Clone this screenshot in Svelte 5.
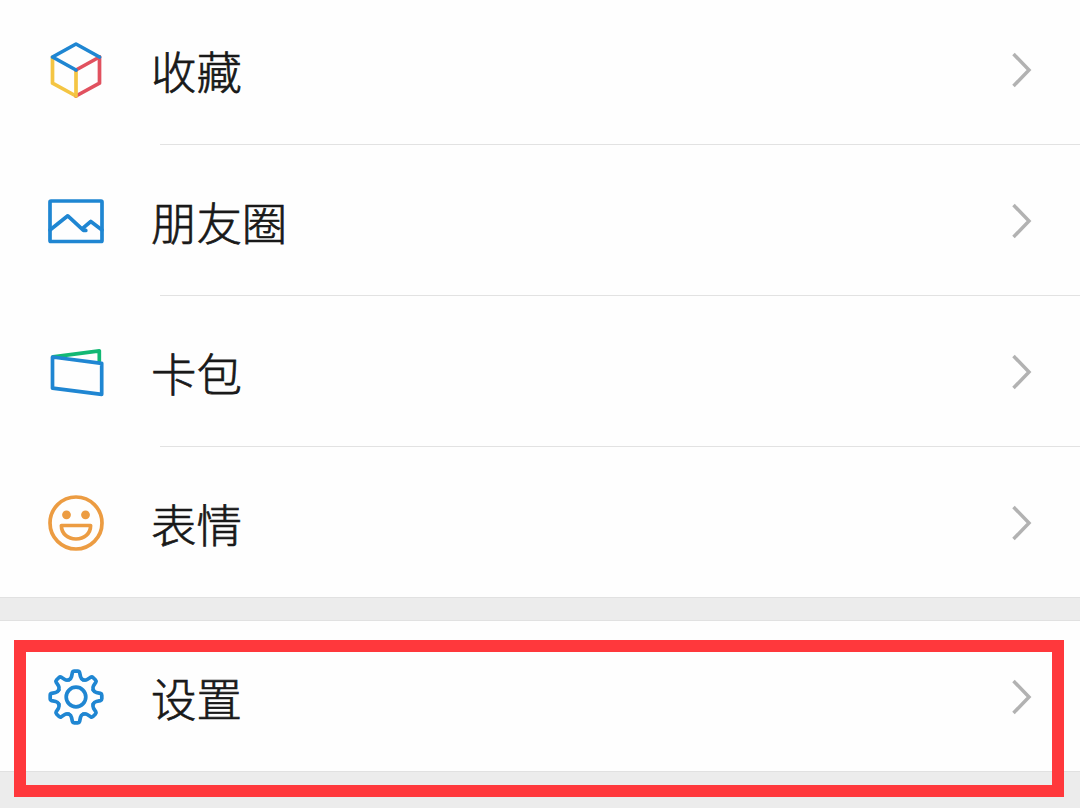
<script lang="ts">
  type Item = { id: string; label: string };

  const items: Item[] = [
    { id: 'favorites', label: '收藏' },
    { id: 'moments', label: '朋友圈' },
    { id: 'cards', label: '卡包' },
    { id: 'stickers', label: '表情' },
  ];

  const settings: Item = { id: 'settings', label: '设置' };
  const teeth = [0, 45, 90, 135, 180, 225, 270, 315];

  // one tooth of the gear, rotated around the icon's centre
  const tooth = 'M22.9 12.8Q25 11.8 25.5 9.7L26.4 5.6Q26.8 4.2 28.2 4.2H31.8Q33.2 4.2 33.6 5.6L34.5 9.7Q35 11.8 37.1 12.8';
</script>

{#snippet row(item: Item)}
  <div class="row">
    <svg class="icon" viewBox="0 0 60 60">
      {#if item.id === 'favorites'}
        <path d="M6.5 17V43.2L30 56" stroke="#f4c543" />
        <path d="M30 56L53.5 43.2V17" stroke="#e1515f" />
        <path d="M30 30V56" stroke="#f4c543" />
        <path d="M53.5 17L30 30" stroke="#e1515f" />
        <path d="M53.5 17L30 4L6.5 17L30 30" stroke="#1f86d2" />
      {:else if item.id === 'moments'}
        <rect x="4" y="10" width="52" height="40.5" rx="1" />
        <path d="M4 39L21.8 24.8L37.5 39.4H39.8M36 37.8L44.8 30.5L56 39" />
      {:else if item.id === 'cards'}
        <path d="M7 14.8L53.3 8.8V19" stroke="#12b874" />
        <path d="M6.5 15L55.7 21.3V52.3L6.5 46.2Z" />
      {:else if item.id === 'stickers'}
        <g stroke="#ec9c42">
          <circle cx="30" cy="30" r="26" />
          <path d="M15.4 32.5H44.6C44.6 41 38 46 30 46S15.4 41 15.4 32.5Z" />
          <circle class="eye" cx="20.5" cy="21.8" r="4.4" />
          <circle class="eye" cx="39.5" cy="21.8" r="4.4" />
        </g>
      {:else}
        {#each teeth as angle}
          <path d={tooth} transform="rotate({angle} 30 30)" />
        {/each}
        <circle cx="30" cy="30" r="9.8" />
      {/if}
    </svg>
    <span class="label">{item.label}</span>
    <svg class="arrow" viewBox="0 0 24 40">
      <path d="M4.5 4L20 20L4.5 36" />
    </svg>
  </div>
{/snippet}

<main class="page">
  <section class="group">
    {#each items as item}
      {@render row(item)}
    {/each}
  </section>
  <section class="group last">
    {@render row(settings)}
  </section>
  <div class="highlight"></div>
</main>

<style>
  :global(body) {
    background: #ececec;
  }

  .page {
    position: relative;
    height: 808px;
    overflow: hidden;
    background: #ececec;
    font-family: 'Noto Sans CJK SC', sans-serif;
  }

  .group {
    box-sizing: border-box;
    height: 598px;
    padding-top: 1px;
    background: #fefefe;
    border-bottom: 1px solid #e1e1e1;
  }

  .group.last {
    height: 152px;
    margin-top: 22px;
    padding-top: 0;
    border-top: 1px solid #e1e1e1;
  }

  .row {
    position: relative;
    display: flex;
    align-items: center;
    box-sizing: border-box;
    height: 151px;
    padding: 0 47px 0 46px;
  }

  .row:first-child {
    height: 144px;
    padding-bottom: 6px;
  }

  .last .row:first-child {
    height: 150px;
    padding-top: 2px;
    padding-bottom: 0;
  }

  .row:not(:last-child)::after {
    content: '';
    position: absolute;
    left: 160px;
    right: 0;
    bottom: 0;
    height: 1px;
    background: #e2e2e2;
  }

  .icon {
    width: 60px;
    height: 60px;
    fill: none;
    stroke: #1f86d2;
    stroke-width: 3.7;
    stroke-linecap: round;
    stroke-linejoin: round;
  }

  .eye {
    fill: #ec9c42;
    stroke: none;
  }

  .label {
    flex: 1;
    margin-left: 45px;
    color: #191919;
    font-size: 45.4px;
    font-weight: 300;
    line-height: 60px;
    -webkit-text-stroke: 0.7px #191919;
  }

  .arrow {
    width: 24px;
    height: 40px;
    fill: none;
    stroke: #b2b2b2;
    stroke-width: 3.5;
  }

  .highlight {
    position: absolute;
    left: 14px;
    top: 640px;
    box-sizing: border-box;
    width: 1050px;
    height: 157px;
    border: 12px solid #ff383c;
  }
</style>
